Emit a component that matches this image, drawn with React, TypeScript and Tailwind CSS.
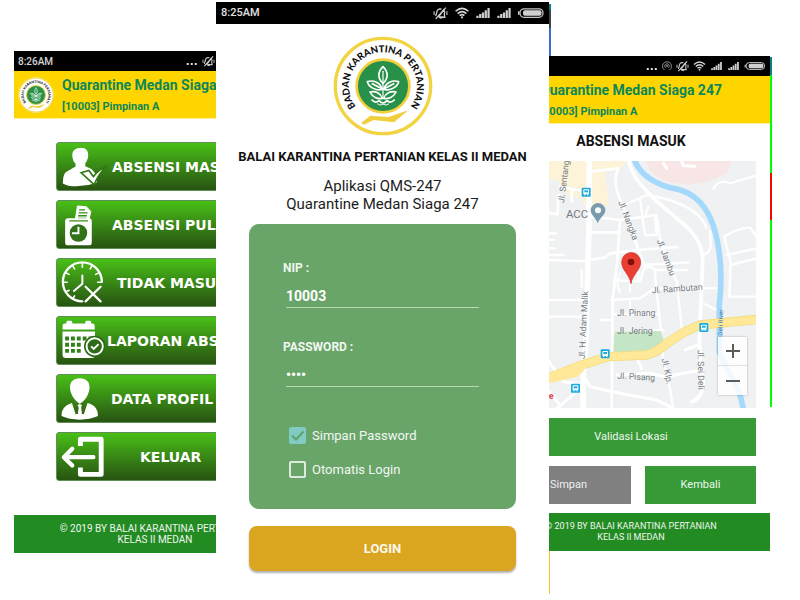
import React, { useState } from "react";

function Logo({ className }: { className: string }) {
  return (
    <svg viewBox="0 0 300 300" className={className} role="img" aria-label="Badan Karantina Pertanian">
      <circle cx="150" cy="150" r="148" fill="#fff" />
      <circle cx="150" cy="150" r="143" fill="none" stroke="#f2d443" strokeWidth="10" />
      <circle cx="150" cy="150" r="79" fill="#279049" stroke="#f2cf3c" strokeWidth="8" />
      <path
        d="M85 260 L112 239 L166 243 L226 223 L183 259 L122 252 L92 266 Z"
        fill="#f0cf3f"
      />
      <g fill="none" stroke="#fff" strokeWidth="5" strokeLinejoin="round" strokeLinecap="round">
        <path d="M150 92 C133 108 134 128 150 142 C166 128 167 108 150 92 Z" />
        <path d="M150 106 V186" strokeWidth="3.5" />
        <path d="M148 160 C142 140 122 131 103 137 C108 155 130 165 148 160 Z M148 159 L118 143" />
        <path d="M152 160 C158 140 178 131 197 137 C192 155 170 165 152 160 Z M152 159 L182 143" />
        <path d="M148 187 C143 172 128 164 111 168 C118 183 134 190 148 187 Z" />
        <path d="M152 187 C157 172 172 164 189 168 C182 183 166 190 152 187 Z" />
        <path d="M117 192 Q127 203 138 194 Q150 208 162 194 Q173 203 184 192" />
        <path d="M134 204 Q142 211 150 204 Q158 211 167 204" strokeWidth="3" />
      </g>
      <defs>
        <path id="logo-arc" d="M76 221 A102 102 0 1 1 224 221" />
      </defs>
      <text fontFamily="Lato, 'Liberation Sans', sans-serif" fontWeight="900" fontSize="29" fill="#111">
        <textPath href="#logo-arc" startOffset="50%" textAnchor="middle">
          BADAN KARANTINA PERTANIAN
        </textPath>
      </text>
    </svg>
  );
}

function MutedBell({ className }: { className: string }) {
  return (
    <svg viewBox="0 0 28 24" className={className} fill="none" stroke="#cfcfcf" strokeWidth="2.4">
      <path d="M11 18 L20 5 Q23 9 21 13 L22 19 Z M16 4 Q8 2 7 10 L5 17 M11 18 Q13 22 17 20" />
      <path d="M24 1 L5 22" strokeWidth="2.6" />
      <path d="M2 8 V15 M26 8 V15" strokeWidth="2" />
    </svg>
  );
}

function Wifi({ className }: { className: string }) {
  return (
    <svg viewBox="0 0 24 20" className={className} fill="none" stroke="#d4d4d4" strokeWidth="2.8">
      <path d="M1 7 Q12 -3 23 7 M4.500 11 Q12 4 19.500 11 M8 14.500 Q12 11 16 14.500" />
      <circle cx="12" cy="17.500" r="1.800" fill="#d4d4d4" stroke="none" />
    </svg>
  );
}

function Signal({ className }: { className: string }) {
  return (
    <svg viewBox="0 0 24 18" className={className} fill="#cfcfcf">
      <path d="M0 14h4v4H0z M5 11h4v7H5z M10 8h4v10h-4z M15 4h4v14h-4z M20 0h4v18h-4z" />
    </svg>
  );
}

function Battery({ className }: { className: string }) {
  return (
    <svg viewBox="0 0 52 20" className={className}>
      <rect x="4" y="1.500" width="46" height="17" rx="8" fill="none" stroke="#c8c8c8" strokeWidth="2.500" />
      <rect x="10" y="4.500" width="37" height="11" rx="4" fill="#cfcfcf" />
      <rect x="0" y="6" width="3" height="8" rx="1.500" fill="#c8c8c8" />
    </svg>
  );
}

function Dots() {
  return (
    <svg viewBox="0 0 30 30" className="h-3 w-3" fill="#e0e0e0">
      <path d="M2 20h5v5H2z M12 20h5v5h-5z M22 20h5v5h-5z" />
    </svg>
  );
}

function SmallStatusBar({ time, hotspot }: { time?: string; hotspot?: boolean }) {
  return (
    <div className="flex h-5 items-center bg-black pr-1 pl-1 text-[10px] font-medium text-[#d6d6d6]">
      <span>{time}</span>
      <div className="ml-auto flex items-center gap-1">
        <Dots />
        {hotspot && (
          <svg viewBox="0 0 20 20" className="h-[10px] w-[10px]" fill="none" stroke="#8b8b8b" strokeWidth="2">
            <path d="M5 18 A9 9 0 1 1 15 18 M7 13.500 A4.500 4.500 0 1 1 13 13.500" />
            <circle cx="10" cy="10" r="1.500" />
          </svg>
        )}
        <MutedBell className="h-[11px] w-[13px]" />
        <Wifi className="h-[10px] w-[13px]" />
        <Signal className="h-2 w-[13px]" />
        <Signal className="h-2 w-[13px]" />
        <Battery className="h-2 w-[22px]" />
      </div>
    </div>
  );
}

function AppHeader() {
  return (
    <header className="flex h-12 items-center border-b border-[#fff0a0] bg-[#ffd500] pl-1 text-[#0c8759]">
      <Logo className="h-9 w-9 shrink-0" />
      <div className="ml-2">
        <div className="text-sm leading-6 font-bold whitespace-nowrap">Quarantine Medan Siaga 247</div>
        <div className="text-[11px] leading-5 font-bold">[10003] Pimpinan A</div>
      </div>
    </header>
  );
}

function AppFooter({ size }: { size: string }) {
  return (
    <footer
      className={`flex h-[38px] flex-col items-center justify-center bg-[#228b22] leading-[11px] whitespace-nowrap text-[#eef6ee] ${size}`}
    >
      <span>© 2019 BY BALAI KARANTINA PERTANIAN</span>
      <span>KELAS II MEDAN</span>
    </footer>
  );
}

const menuItems: { label: string; pad: string; icon: React.ReactNode }[] = [
  {
    label: "ABSENSI MASUK",
    pad: "pl-[55px]",
    icon: (
      <>
        <path
          d="M75 14 c14 0 22 10 21 24 c-1 12 -5 19 -9 24 v9 l19 9 l10 11 l9 12 l-4 20 q-30 10 -62 10 q-26 0 -41 -9 q0 -28 10 -35 l29 -17 v-9 c-6 -5 -9 -13 -10 -25 c-1 -14 9 -24 28 -24z"
          fill="#fff"
        />
        <path d="M74 91 L98 84 L112 103 Q128 82 154 69 Q128 94 114 128 Z" fill="#fff" stroke="#2f7813" strokeWidth="5" />
      </>
    ),
  },
  {
    label: "ABSENSI PULANG",
    pad: "pl-[55px]",
    icon: (
      <>
        <path d="M56 59 L63 15 L90 17 L104 32 L98 59 Z" fill="#fff" stroke="#fff" strokeWidth="3" />
        <path d="M68 27 h18 M67 36 h27 M65 45 h27 M64 53 h26" stroke="#388d15" strokeWidth="4" />
        <rect x="25" y="53" width="82" height="83" rx="9" fill="#fff" />
        <path d="M38 61 h57" stroke="#388d15" strokeWidth="4" />
        <circle cx="66" cy="98" r="27" fill="#32731a" />
        <path d="M66 79 V99 H46" fill="none" stroke="#fff" strokeWidth="6" />
      </>
    ),
  },
  {
    label: "TIDAK MASUK",
    pad: "pl-[60px]",
    icon: (
      <g fill="none" stroke="#fff" strokeWidth="7" strokeLinecap="round">
        <path d="M138 70 A60 60 0 1 0 78 130" />
        <path d="M78 12 v13 M18 71 h13 M125 71 h12 M48 20 l6 10 M108 20 l-6 10 M27 42 l10 5 M129 42 l-10 5 M27 101 l10 -5 M48 122 l6 -9" strokeWidth="5" />
        <path d="M78 50 V76 L52 98" strokeWidth="6" />
        <path d="M88 85 L134 130 M134 85 L88 130" />
      </g>
    ),
  },
  {
    label: "LAPORAN ABSENSI",
    pad: "pl-[50px]",
    icon: (
      <>
        <path
          d="M17 38 V27 q0-7 7-7 h5 v-5 q0-4 5-4 h8 q5 0 5 4 v5 h40 v-5 q0-4 5-4 h8 q5 0 5 4 v5 h5 q6 0 6 7 v11 z"
          fill="#fff"
        />
        <path d="M17 44 H117 V116 q0 10 -10 10 H27 q-10 0 -10 -10 Z" fill="#fff" />
        <path
          d="M25 60h12v12H25z M43 60h12v12H43z M61 60h12v12H61z M79 60h12v12H79z M97 60h12v12H97z M25 79h12v12H25z M43 79h12v12H43z M61 79h12v12H61z M25 98h12v12H25z M43 98h12v12H43z M61 98h12v12H61z"
          fill="#31801a"
        />
        <circle cx="116" cy="90" r="33" fill="#2e6b16" />
        <circle cx="116" cy="90" r="25" fill="none" stroke="#fff" strokeWidth="6" />
        <path d="M105 90 L113 98 L128 83" fill="none" stroke="#fff" strokeWidth="6" />
      </>
    ),
  },
  {
    label: "DATA PROFIL",
    pad: "pl-[54px]",
    icon: (
      <>
        <path d="M70 10 c20 0 31 12 30 30 c-1 15 -10 38 -30 48 c-19 -10 -29 -32 -30 -48 c-1 -18 10 -30 30 -30z" fill="#fff" />
        <path
          d="M46 86 L58 122 L67 100 L63 92 L70 89 L77 92 L73 100 L82 122 L94 86 Q115 92 121 104 Q127 113 126 126 Q102 137 70 137 Q38 137 14 126 Q13 112 20 103 Q28 92 46 86Z"
          fill="#fff"
        />
        <path d="M58 120 L65 99 L75 99 L82 120 Z" fill="#315f1a" />
        <path d="M67 99 L70 94 L74 99 L77 117 L71 124 L64 117Z" fill="#fff" />
      </>
    ),
  },
  {
    label: "KELUAR",
    pad: "pl-[83px]",
    icon: (
      <g fill="none" stroke="#fff" strokeWidth="15" strokeLinejoin="round">
        <path d="M72 40 V19 H136 V127 H72 V106" />
        <path d="M23 74 H112 M47 48 L21 74 L47 100" strokeLinecap="round" strokeWidth="13" />
      </g>
    ),
  },
];

function MenuPhone() {
  return (
    <section className="mt-[51px] min-w-0 overflow-hidden">
      <div className="w-[282px]">
        <SmallStatusBar time="8:26AM" />
        <AppHeader />
        <nav className="mx-[42px] mt-[23px] flex flex-col gap-[9px]">
          {menuItems.map((item) => (
            <button
              key={item.label}
              type="button"
              className="grid h-[49px] grid-cols-1 grid-rows-1 items-center overflow-hidden rounded-[3px] border border-[#5f8f55] bg-linear-to-b from-[#48c016] to-[#285411] text-left"
            >
              <svg viewBox="0 0 160 147" className="col-start-1 row-start-1 h-[48px] w-[52px]" aria-hidden="true">
                {item.icon}
              </svg>
              <span
                className={`col-start-1 row-start-1 font-['DejaVu_Sans',sans-serif] text-sm font-bold whitespace-nowrap text-white ${item.pad}`}
              >
                {item.label}
              </span>
            </button>
          ))}
        </nav>
        <div className="mt-[34px]">
          <AppFooter size="text-[10px]" />
        </div>
      </div>
    </section>
  );
}

function Tick({ label, initial }: { label: string; initial: boolean }) {
  const [on, setOn] = useState(initial);
  return (
    <label className="flex items-center text-[13px] leading-[17px] text-[#f1f7f1]">
      <span className="mr-1.5 grid h-[17px] w-[17px]">
        <input
          type="checkbox"
          checked={on}
          onChange={(e) => setOn(e.target.checked)}
          className="col-start-1 row-start-1 h-[17px] w-[17px] appearance-none rounded-[2px] border-2 border-[#dcebdc] checked:border-[#80cbc4] checked:bg-[#80cbc4]"
        />
        {on && (
          <svg viewBox="0 0 17 17" className="pointer-events-none col-start-1 row-start-1" fill="none" stroke="#5fa267" strokeWidth="2">
            <path d="M3 8.500 L7 12.500 L14.500 4.500" />
          </svg>
        )}
      </span>
      {label}
    </label>
  );
}

function LoginPhone() {
  return (
    <section className="flex min-w-0 flex-col bg-white pt-0.5">
      <div className="flex h-[22px] items-center bg-black px-[5px] text-[11px] font-medium text-[#e0e0e0]">
        <span>8:25AM</span>
        <div className="ml-auto flex items-center gap-[7px]">
          <MutedBell className="h-[13px] w-[15px]" />
          <Wifi className="h-3 w-[14px]" />
          <Signal className="h-[10px] w-[14px]" />
          <Signal className="h-[10px] w-[14px]" />
          <Battery className="h-[10px] w-[26px]" />
        </div>
      </div>
      <Logo className="mx-auto mt-3 h-[100px] w-[100px]" />
      <h1 className="mt-3 text-center text-[13px] leading-[18px] font-bold whitespace-nowrap text-[#111]">
        BALAI KARANTINA PERTANIAN KELAS II MEDAN
      </h1>
      <p className="mt-[11px] text-center text-[15px] leading-[18px] text-[#1c1c1c]">
        Aplikasi QMS-247
        <br />
        Quarantine Medan Siaga 247
      </p>
      <form className="mx-[33px]" onSubmit={(e) => e.preventDefault()}>
        <div className="mt-[11px] h-[285px] rounded-[10px] bg-[#69a569] px-[34px] pt-9">
          <label htmlFor="nip" className="block text-xs leading-4 font-bold text-[#f1f7f1]">
            NIP :
          </label>
          <div className="mx-[3px]">
            <input
              id="nip"
              defaultValue="10003"
              className="mt-2 h-6 w-full border-b border-[#b4dab2] bg-transparent text-sm font-bold text-white outline-none"
            />
          </div>
          <label htmlFor="password" className="mt-[31px] block text-xs leading-4 font-bold text-[#f1f7f1]">
            PASSWORD :
          </label>
          <div className="mx-[3px]">
            <input
              id="password"
              type="password"
              defaultValue="1000"
              className="mt-2 h-6 w-full border-b border-[#b4dab2] bg-transparent text-sm font-bold text-white outline-none"
            />
          </div>
          <div className="mt-10 ml-1.5 flex flex-col gap-[17px]">
            <Tick label="Simpan Password" initial={true} />
            <Tick label="Otomatis Login" initial={false} />
          </div>
        </div>
        <button
          type="submit"
          className="mt-[17px] h-[45px] w-full rounded-lg bg-[#daa520] text-[13px] font-bold text-[#fdf8ec] shadow-[0_2px_2px_rgba(0,0,0,0.3)]"
        >
          LOGIN
        </button>
      </form>
    </section>
  );
}

function BusStop({ x, y }: { x: number; y: number }) {
  return (
    <g transform={`translate(${x} ${y})`}>
      <rect width="27" height="27" rx="3" fill="#1cabe0" />
      <rect x="5" y="5" width="17" height="15" rx="2" fill="#fff" />
      <rect x="8" y="8" width="11" height="6" fill="#1cabe0" />
      <path d="M7 20h4v3H7z M16 20h4v3h-4z" fill="#fff" />
    </g>
  );
}

function MapView() {
  return (
    <div className="relative">
      <svg viewBox="-102 18 750 741" className="block w-full" role="img" aria-label="Peta lokasi">
        <rect x="-102" y="18" width="750" height="741" fill="#eff1f3" />
        <path d="M-102 18 H260 L240 45 L195 50 L207 150 L160 155 L152 185 L125 130 L80 120 L60 80 L27 70 H-102 Z" fill="#fcf3d8" />
        <path d="M318 18 C330 60 360 78 410 85 C470 95 520 75 560 55 L575 18 Z" fill="#f8e6e6" />
        <g fill="none" stroke="#fff" strokeLinecap="round" strokeLinejoin="round">
          <path d="M148 10 L147 210 L138 560 L130 655 L129 770" strokeWidth="17" />
          <path
            d="M265 15 C280 75 310 95 345 135 L440 215 C480 255 492 290 487 340 L478 560 Q482 630 490 680 Q488 730 455 740"
            strokeWidth="11"
          />
          <path
            d="M55 120 L53 178 L10 172 M60 95 L125 108 M95 105 V140 M148 50 L235 40 M235 40 C215 80 235 120 245 145 L270 210 L300 300 L315 335 M150 185 L240 195 L350 180 M240 195 L230 340 L218 430 L215 755 M155 232 H240 M27 315 L130 318 L195 308 L210 295 L290 285 L412 276"
            strokeWidth="8"
          />
          <path
            d="M-20 235 H50 M-20 255 H40 M-20 280 H45 M-20 300 H70 M240 155 L320 120 C390 130 480 160 500 220 M300 130 L315 240 L350 240 L345 190 M315 185 L325 155 M350 185 L360 250 L380 310 L410 380 L425 520 M310 330 L445 322 M345 345 L440 345 M220 375 L300 380 L310 345 Q325 325 345 345 L348 395 L360 500 L370 620 L390 700 L400 765"
            strokeWidth="7"
          />
          <path
            d="M490 300 Q515 290 512 265 L510 230 M520 100 Q540 70 570 85 Q600 75 655 60 M560 300 L650 280 M552 245 Q590 220 630 218 L650 245 M552 245 L572 320 L568 425 H650 M572 330 L650 310 M125 345 V395 M27 435 H140 M27 485 H130 M180 495 H215 M215 435 L300 430 L345 400 H480 M220 478 H355 M220 535 L370 525 M270 435 V475 M295 300 V380"
            strokeWidth="7"
          />
          <path d="M230 660 L330 655 L375 665 L485 645 M290 610 L305 640 M435 585 L475 570 M370 25 L380 40 M425 18 L430 32 L465 34 M135 670 L150 695 L240 715 L350 735 L410 765 M135 690 L45 765 M27 620 L70 680 L130 690 M27 710 L60 750" strokeWidth="9" />
          <path d="M270 385 V410 M240 355 Q225 385 240 412 M490 400 H530 M490 445 L530 465" strokeWidth="6" />
        </g>
        <path d="M223 530 L363 528 L372 562 L345 590 L220 595 Z" fill="#c5e6c6" />
        <path
          d="M283 15 C300 58 335 82 390 98 C465 108 508 155 528 240 C548 325 545 390 538 450 L538 590 C555 645 602 690 610 765"
          fill="none"
          stroke="#a5d9fb"
          strokeWidth="17"
        />
        <g fill="none" strokeLinejoin="round">
          <path d="M-110 700 L27 668 L125 630 L205 605 L320 600 Q355 590 380 565 L435 530 L480 510 L655 493" stroke="#f5dd7f" strokeWidth="28" />
          <path d="M-110 700 L27 668 L125 630 L205 605 L320 600 Q355 590 380 565 L435 530 L480 510 L655 493" stroke="#ffe999" strokeWidth="23" />
          <path d="M27 675 L95 660 Q120 655 128 632" stroke="#ffe999" strokeWidth="18" />
        </g>
        <BusStop x={125} y={98} />
        <BusStop x={478} y={504} />
        <BusStop x={182} y={583} />
        <BusStop x={93} y={686} />
        <g fill="#757a80" fontFamily="Roboto, sans-serif" fontSize="26">
          <text x="78" y="188" fontSize="34">ACC</text>
          <text transform="translate(72 145) rotate(-83)">Jl. Sentang</text>
          <text transform="translate(235 142) rotate(69)">Jl. Nangka</text>
          <text transform="translate(350 257) rotate(69)">Jl. Jambu</text>
          <text transform="translate(336 415) rotate(-4)">Jl. Rambutan</text>
          <text x="232" y="484">Jl. Pinang</text>
          <text x="232" y="536">Jl. Jering</text>
          <text transform="translate(232 671) rotate(3)">Jl. Pisang</text>
          <text transform="translate(134 612) rotate(-87)">Jl. H. Adam Malik</text>
          <text transform="translate(365 612) rotate(78)">Jl. Klp.</text>
          <text transform="translate(473 585) rotate(89)">Jl. Sei Deli</text>
          <text transform="translate(547 542) rotate(-88)" fontSize="19" fill="#477eae">Deli River</text>
        </g>
        <text x="26" y="732" fontFamily="Roboto, sans-serif" fontSize="27" fontWeight="700" fill="#d94545">e</text>
        <path d="M173 205 C168 188 152 181 152 166 A22 22 0 0 1 196 166 C196 181 179 188 173 205 Z" fill="#7a9bae" />
        <circle cx="174" cy="166" r="9" fill="#fff" />
        <path d="M273 386 C268 356 245 347 245 321 A28.500 28.500 0 0 1 302 321 C302 347 278 356 273 386 Z" fill="#e93f33" stroke="#c9302a" strokeWidth="2" />
        <circle cx="273" cy="321" r="10" fill="#7f100c" />
      </svg>
      <div className="absolute right-[9px] bottom-[13px] flex flex-col divide-y divide-[#e0e0e0] bg-white/85 text-[#5c5c5c] shadow-[0_0_2px_rgba(0,0,0,0.3)]">
        <button type="button" aria-label="Perbesar" className="grid h-[29px] w-[29px] place-items-center">
          <svg viewBox="0 0 14 14" className="h-[14px] w-[14px]" stroke="currentColor" strokeWidth="2">
            <path d="M7 0V14M0 7H14" />
          </svg>
        </button>
        <button type="button" aria-label="Perkecil" className="grid h-[29px] w-[29px] place-items-center">
          <svg viewBox="0 0 14 14" className="h-[14px] w-[14px]" stroke="currentColor" strokeWidth="2">
            <path d="M0 7H14" />
          </svg>
        </button>
      </div>
    </div>
  );
}

function AttendancePhone() {
  return (
    <section className="flex min-w-0 flex-col pt-1">
      <div className="flex h-[52px] w-0.5 flex-col">
        <div className="h-1.5 bg-[#087f87]" />
        <div className="h-[18px] bg-[#3c4448]" />
        <div className="h-7 bg-[#3c6cd0]" />
      </div>
      <div className="flex">
        <div className="flex min-w-0 flex-1 justify-end overflow-hidden">
          <div className="w-[278px] shrink-0">
            <SmallStatusBar hotspot />
            <AppHeader />
            <h2 className="mt-[5px] text-center text-sm leading-6 font-bold text-[#111]">ABSENSI MASUK</h2>
            <div className="mx-3.5 mt-2">
              <MapView />
              <button type="button" className="mt-[10px] h-[38px] w-full bg-[#379a37] text-[11px] text-[#eef7ee]">
                Validasi Lokasi
              </button>
              <div className="mt-[10px] flex gap-3.5">
                <button type="button" className="h-[38px] flex-[125] bg-[#808080] text-[11px] text-[#f0f0f0]">
                  Simpan
                </button>
                <button type="button" className="h-[38px] flex-[111] bg-[#379a37] text-[11px] text-[#eef7ee]">
                  Kembali
                </button>
              </div>
            </div>
            <div className="mt-[9px]">
              <AppFooter size="text-[9px]" />
            </div>
          </div>
        </div>
        <div className="mt-px flex h-[350px] w-0.5 flex-col">
          <div className="h-[18px] bg-[#087f87]" />
          <div className="h-[98px] bg-[#00ff00]" />
          <div className="h-[47px] bg-[#ff0000]" />
          <div className="flex-1 bg-[#00ff00]" />
        </div>
      </div>
      <div className="h-[43px] w-px bg-[#fbc02d]" />
    </section>
  );
}

export default function App() {
  return (
    <main className="grid min-h-screen grid-cols-[202fr_333fr_223fr] items-start bg-white pr-7 pl-3.5 font-[Roboto,sans-serif]">
      <MenuPhone />
      <LoginPhone />
      <AttendancePhone />
    </main>
  );
}
